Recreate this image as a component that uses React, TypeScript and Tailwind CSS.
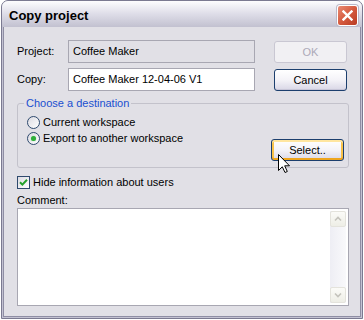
const font = { fontFamily: '"Liberation Sans", Arial, sans-serif' };

function XpButton({ label, disabled, focused }: { label: string; disabled?: boolean; focused?: boolean }) {
  if (disabled) {
    return (
      <div className="w-[73px] h-[22px] flex items-center justify-center rounded-[3px] border border-[#c9c7d2] bg-[#f1f0f3] text-[#aca9b8]">
        {label}
      </div>
    );
  }
  return (
    <div
      className={
        "w-[73px] h-[22px] flex items-center justify-center rounded-[3px] border border-[#1c3f6e] bg-gradient-to-b from-[#ffffff] via-[#f4f3f8] to-[#d9d7e6] text-black " +
        (focused
          ? "shadow-[inset_0_2px_0_#ffe6a0,inset_0_-2px_0_#eea51e,inset_2px_0_0_#f8c24a,inset_-2px_0_0_#f8c24a]"
          : "shadow-[inset_0_-1px_0_#c8c6d8]")
      }
    >
      {label}
    </div>
  );
}

function Radio({ checked, label }: { checked?: boolean; label: string }) {
  return (
    <div className="h-[16px] flex items-center">
      <div className="w-[13px] h-[13px] rounded-full border border-[#2f4a6e] bg-gradient-to-br from-[#dcdbe2] to-[#ffffff] flex items-center justify-center">
        {checked && <div className="w-[5px] h-[5px] rounded-full bg-[#2fae3b] shadow-[0_0_1px_#7fd47f]" />}
      </div>
      <span className="ml-[3px]">{label}</span>
    </div>
  );
}

export default function App() {
  return (
    <div className="relative w-[364px] h-[320px] bg-white text-[11px] leading-[13px] text-black" style={font}>
      {/* window */}
      <div className="ml-[1px] w-[362px] h-[319px] border border-[#7b7a91] rounded-t-[7px] overflow-hidden flex flex-col bg-[#c3c2d2]">
        {/* title bar */}
        <div className="h-[26px] shrink-0 flex items-start justify-between pl-[7px] pr-[4px] bg-gradient-to-b from-[#fdfdfe] via-[#dedde8] to-[#c2c1d0]">
          <div className="pt-[7px] text-[13px] leading-[15px] font-bold text-black">Copy project</div>
          <div className="mt-[4px] w-[21px] h-[21px] rounded-[3px] border border-white bg-gradient-to-br from-[#e98b74] via-[#d55a3e] to-[#b83a22] flex items-center justify-center shadow-[0_0_0_1px_#b9b8c8]">
            <svg width="11" height="11" viewBox="0 0 11 11">
              <path d="M1.5 1.5 L9.5 9.5 M9.5 1.5 L1.5 9.5" stroke="white" strokeWidth="2.4" strokeLinecap="square" />
            </svg>
          </div>
        </div>

        {/* body frame */}
        <div className="flex-1 px-[1px] pb-[1px]">
          <div className="h-full border-x border-b border-[#8f8ea4] bg-[#e1e0e6] pl-[13px] flex flex-col">
            {/* row 1 */}
            <div className="mt-[13px] h-[23px] flex items-start">
              <div className="w-[51px] h-[23px] flex items-center">Project:</div>
              <div className="w-[187px] h-[23px] border border-[#a8a7b2] bg-[#e1e0e6] flex items-center pl-[4px]">Coffee Maker</div>
              <div className="ml-[19px] mt-[1px]">
                <XpButton label="OK" disabled />
              </div>
            </div>

            {/* row 2 */}
            <div className="mt-[5px] h-[23px] flex items-start">
              <div className="w-[51px] h-[23px] flex items-center">Copy:</div>
              <div className="w-[187px] h-[23px] border border-[#a8a7b2] bg-white flex items-center pl-[4px]">Coffee Maker 12-04-06 V1</div>
              <div className="ml-[19px] mt-[1px]">
                <XpButton label="Cancel" />
              </div>
            </div>

            {/* group box */}
            <div className="relative mt-[12px] w-[332px] h-[65px] border border-[#c3c2cb] rounded-[3px] flex">
              <div className="absolute -top-[7px] left-[6px] px-[2px] bg-[#e1e0e6] text-[#1a4fd0]">Choose a destination</div>
              <div className="flex-1 pt-[10px] pl-[9px] flex flex-col">
                <Radio label="Current workspace" />
                <Radio label="Export to another workspace" checked />
              </div>
              <div className="self-end mb-[6px] mr-[4px]">
                <XpButton label="Select.." focused />
              </div>
            </div>

            {/* checkbox */}
            <div className="mt-[6px] h-[16px] flex items-center">
              <div className="w-[13px] h-[13px] border border-[#2f4a6e] bg-gradient-to-br from-[#dcdbe2] to-[#ffffff] flex items-center justify-center">
                <svg width="9" height="9" viewBox="0 0 9 9">
                  <path d="M1 4.2 L3.4 6.6 L8 1.8" stroke="#23a12b" strokeWidth="2" fill="none" />
                </svg>
              </div>
              <span className="ml-[3px]">Hide information about users</span>
            </div>

            {/* comment */}
            <div className="mt-[3px] h-[14px] flex items-center">Comment:</div>
            <div className="mt-[1px] w-[332px] h-[98px] border border-[#a8a7b2] bg-white flex justify-end p-[2px]">
              <div className="w-[16px] h-full flex flex-col bg-gradient-to-r from-[#eeeef4] to-[#f9f9fb]">
                <div className="h-[16px] rounded-[2px] border border-[#e4e3dc] bg-gradient-to-b from-[#fbfbf8] to-[#eeeee6] flex items-center justify-center">
                  <svg width="8" height="6" viewBox="0 0 8 6">
                    <path d="M1 4.5 L4 1.5 L7 4.5" stroke="#c4c3bc" strokeWidth="1.6" fill="none" />
                  </svg>
                </div>
                <div className="flex-1" />
                <div className="h-[16px] rounded-[2px] border border-[#e4e3dc] bg-gradient-to-b from-[#fbfbf8] to-[#eeeee6] flex items-center justify-center">
                  <svg width="8" height="6" viewBox="0 0 8 6">
                    <path d="M1 1.5 L4 4.5 L7 1.5" stroke="#c4c3bc" strokeWidth="1.6" fill="none" />
                  </svg>
                </div>
              </div>
            </div>
          </div>
        </div>
      </div>

      {/* mouse pointer over Select.. */}
      <svg className="absolute left-[277px] top-[153px]" width="13" height="21" viewBox="0 0 13 21">
        <path d="M1.5 1.5 L1.5 17.5 L5.3 13.8 L8 19.5 L10.3 18.5 L7.7 12.8 L12.5 12.8 Z" fill="white" stroke="black" strokeWidth="1" strokeLinejoin="miter" />
      </svg>
    </div>
  );
}
